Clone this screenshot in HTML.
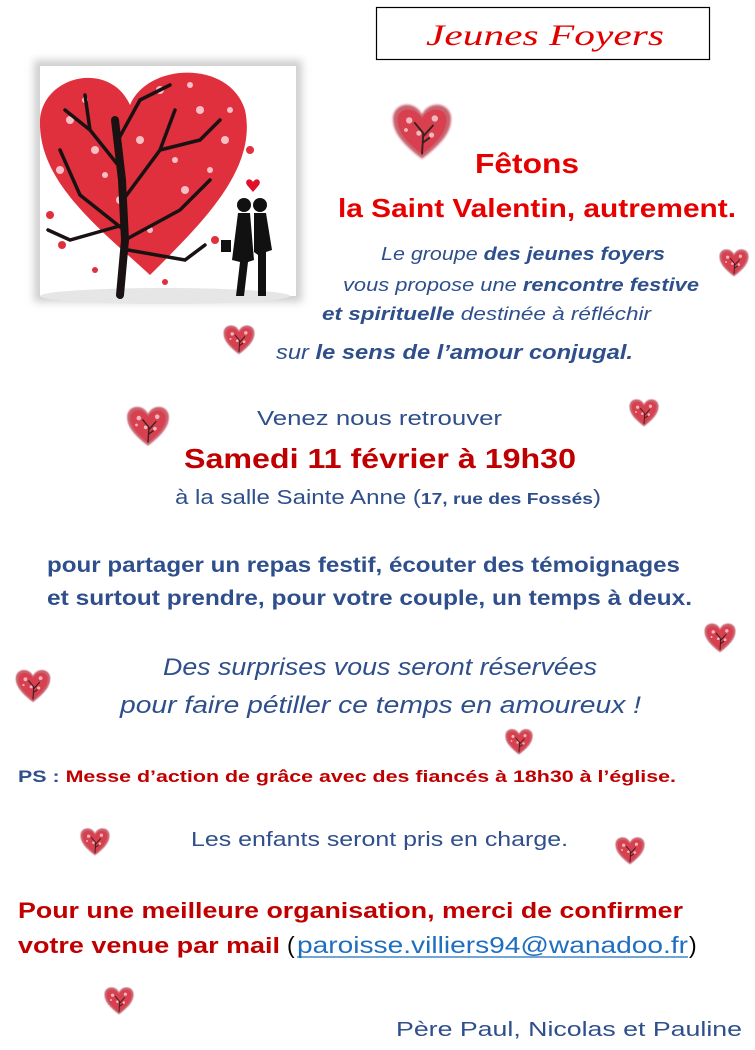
<!DOCTYPE html>
<html><head><meta charset="utf-8"><style>
html,body{margin:0;padding:0;background:#fff;}
svg{display:block}
text{font-family:"Liberation Sans",sans-serif;}
</style></head><body>
<svg width="755" height="1050" viewBox="0 0 755 1050" xmlns="http://www.w3.org/2000/svg">
<defs>
<filter id="blur" x="-30%" y="-30%" width="160%" height="160%"><feGaussianBlur stdDeviation="1.5"/></filter>
<filter id="sh" x="-10%" y="-10%" width="120%" height="120%"><feGaussianBlur stdDeviation="4"/></filter>
<symbol id="h" viewBox="0 0 100 100">
<path d="M50 95 C20 72 2 52 5 28 C9 6 40 4 50 26 C60 4 91 6 95 28 C98 52 80 72 50 95Z" fill="#c9606e" filter="url(#blur)"/>
<path d="M50 88 C24 68 10 50 12 30 C16 14 40 14 50 32 C60 14 84 14 88 30 C90 50 76 68 50 88Z" fill="#d8404f"/>
<circle cx="30" cy="35" r="5" fill="#f2b8c0"/><circle cx="70" cy="32" r="5" fill="#f2b8c0"/><circle cx="45" cy="55" r="4" fill="#f2b8c0"/><circle cx="65" cy="58" r="4" fill="#f2b8c0"/><circle cx="25" cy="50" r="3" fill="#f2b8c0"/>
<path d="M50 88 L52 55 L38 38 M52 60 L68 42 M51 70 L62 62" stroke="#3a2020" stroke-width="3" fill="none"/>
</symbol>
</defs>

<text x="60" y="-4" font-size="16" fill="#9aa4b4">Paroisse de Villiers</text>

<rect x="376.5" y="7.5" width="333" height="52" fill="#fff" stroke="#000" stroke-width="1.2"/>
<text x="545" y="45" text-anchor="middle" font-size="30" fill="#e00000" style="font-family:'Liberation Serif',serif;font-style:italic" textLength="238" lengthAdjust="spacingAndGlyphs">Jeunes Foyers</text>

<rect x="34" y="60" width="268" height="242" fill="#cfcfcf" filter="url(#sh)"/>
<rect x="40" y="66" width="256" height="230" fill="#fff"/>
<ellipse cx="165" cy="296" rx="125" ry="8" fill="#e6e6e6"/>
<path d="M150 275 C95 225 38 180 40 120 C43 75 110 60 130 105 C148 62 230 60 245 110 C258 170 200 225 150 275Z" fill="#e0303e"/>
<g fill="#f7c0c6">
<circle cx="70" cy="120" r="4"/><circle cx="95" cy="150" r="4"/><circle cx="200" cy="110" r="4"/><circle cx="225" cy="140" r="4"/><circle cx="160" cy="90" r="4"/><circle cx="120" cy="200" r="4"/><circle cx="185" cy="190" r="4"/><circle cx="60" cy="170" r="4"/><circle cx="140" cy="140" r="4"/><circle cx="210" cy="170" r="3"/><circle cx="85" cy="100" r="3"/><circle cx="105" cy="175" r="3"/><circle cx="175" cy="160" r="3"/><circle cx="150" cy="230" r="3"/><circle cx="190" cy="85" r="3"/><circle cx="230" cy="110" r="3"/>
</g>
<g fill="#e0303e"><circle cx="50" cy="215" r="4"/><circle cx="62" cy="245" r="4"/><circle cx="215" cy="240" r="4"/><circle cx="250" cy="150" r="4"/><circle cx="165" cy="282" r="3"/><circle cx="95" cy="270" r="3"/></g>
<g stroke="#1a1212" fill="none" stroke-linecap="round">
<path d="M120 295 L125 240 L122 180 L115 120" stroke-width="8"/>
<path d="M124 230 L80 195 L60 150 M123 200 L160 150 L175 110 M122 170 L90 130 L85 95 M118 140 L140 100 L170 85 M125 240 L180 210 L210 180 M128 250 L185 260 L205 245 M123 225 L70 240 L48 230 M160 150 L200 140 L220 120 M90 130 L65 110" stroke-width="3.5"/>
</g>
<path d="M253 182 c-3 -5 -9 -2 -6 3 l6 7 l6 -7 c3 -5 -3 -8 -6 -3z" fill="#e0102a"/>
<g fill="#111">
<circle cx="244" cy="205" r="7"/><circle cx="260" cy="205" r="7"/>
<path d="M238 213 L250 213 L254 260 L248 262 L244 296 L236 296 L240 262 L232 260 Z"/>
<path d="M254 213 L266 213 L272 250 L266 252 L266 296 L258 296 L258 255 L254 252 Z"/>
<rect x="221" y="240" width="10" height="12"/>
</g>

<use href="#h" x="388" y="98" width="68" height="64"/>
<use href="#h" x="716" y="246" width="36" height="32"/>
<use href="#h" x="220" y="322" width="38" height="34"/>
<use href="#h" x="118" y="402" width="60" height="46"/>
<use href="#h" x="624" y="396" width="40" height="32"/>
<use href="#h" x="700" y="620" width="40" height="34"/>
<use href="#h" x="10" y="666" width="46" height="38"/>
<use href="#h" x="498" y="726" width="42" height="30"/>
<use href="#h" x="76" y="825" width="38" height="32"/>
<use href="#h" x="609" y="834" width="42" height="32"/>
<use href="#h" x="98" y="984" width="42" height="32"/>

<text x="527" y="173" text-anchor="middle" font-size="28" font-weight="bold" fill="#e60000" textLength="104" lengthAdjust="spacingAndGlyphs">Fêtons</text>
<text x="338" y="217" font-size="26" font-weight="bold" fill="#e60000" textLength="398" lengthAdjust="spacingAndGlyphs">la Saint Valentin, autrement.</text>

<g fill="#2e4f8c" font-style="italic">
<text x="381" y="260" font-size="18" textLength="284" lengthAdjust="spacingAndGlyphs">Le groupe <tspan font-weight="bold">des jeunes foyers</tspan></text>
<text x="343" y="291" font-size="18" textLength="356" lengthAdjust="spacingAndGlyphs">vous propose une <tspan font-weight="bold">rencontre festive</tspan></text>
<text x="322" y="320" font-size="18" textLength="329" lengthAdjust="spacingAndGlyphs"><tspan font-weight="bold">et spirituelle</tspan> destinée à réfléchir</text>
<text x="276" y="359" font-size="20" textLength="357" lengthAdjust="spacingAndGlyphs">sur <tspan font-weight="bold">le sens de l’amour conjugal.</tspan></text>
</g>

<text x="257" y="425" font-size="20" fill="#2e4f8c" textLength="245" lengthAdjust="spacingAndGlyphs">Venez nous retrouver</text>
<text x="184" y="468" font-size="28" font-weight="bold" fill="#c00000" textLength="392" lengthAdjust="spacingAndGlyphs">Samedi 11 février à 19h30</text>
<text x="175" y="504" font-size="20" fill="#2e4f8c" textLength="426" lengthAdjust="spacingAndGlyphs">à la salle Sainte Anne (<tspan font-weight="bold" font-size="16">17, rue des Fossés</tspan>)</text>

<g fill="#2e4f8c" font-weight="bold" font-size="21">
<text x="47" y="572" textLength="633" lengthAdjust="spacingAndGlyphs">pour partager un repas festif, écouter des témoignages</text>
<text x="47" y="605" textLength="645" lengthAdjust="spacingAndGlyphs">et surtout prendre, pour votre couple, un temps à deux.</text>
</g>

<g fill="#2e4f8c" font-style="italic" font-size="24">
<text x="163" y="675" textLength="434" lengthAdjust="spacingAndGlyphs">Des surprises vous seront réservées</text>
<text x="120" y="713" textLength="521" lengthAdjust="spacingAndGlyphs">pour faire pétiller ce temps en amoureux !</text>
</g>

<text x="18" y="782" font-size="17" font-weight="bold" fill="#c00000" textLength="658" lengthAdjust="spacingAndGlyphs"><tspan fill="#2e4f8c">PS : </tspan>Messe d’action de grâce avec des fiancés à 18h30 à l’église.</text>

<text x="191" y="846" font-size="20" fill="#2e4f8c" textLength="377" lengthAdjust="spacingAndGlyphs">Les enfants seront pris en charge.</text>

<text x="18" y="918" font-size="22" font-weight="bold" fill="#c00000" textLength="665" lengthAdjust="spacingAndGlyphs">Pour une meilleure organisation, merci de confirmer</text>
<text x="18" y="953" font-size="22" font-weight="bold" fill="#c00000" textLength="262" lengthAdjust="spacingAndGlyphs">votre venue par mail</text>
<text x="287" y="953" font-size="23" fill="#000">(</text>
<text x="297" y="953" font-size="23" fill="#1f6fc0" textLength="391" lengthAdjust="spacingAndGlyphs">paroisse.villiers94@wanadoo.fr</text>
<line x1="297" y1="957" x2="688" y2="957" stroke="#1f6fc0" stroke-width="1.3"/>
<text x="689" y="953" font-size="23" fill="#000">)</text>

<text x="396" y="1036" font-size="20" fill="#2e4f8c" textLength="346" lengthAdjust="spacingAndGlyphs">Père Paul, Nicolas et Pauline</text>
</svg>
</body></html>
